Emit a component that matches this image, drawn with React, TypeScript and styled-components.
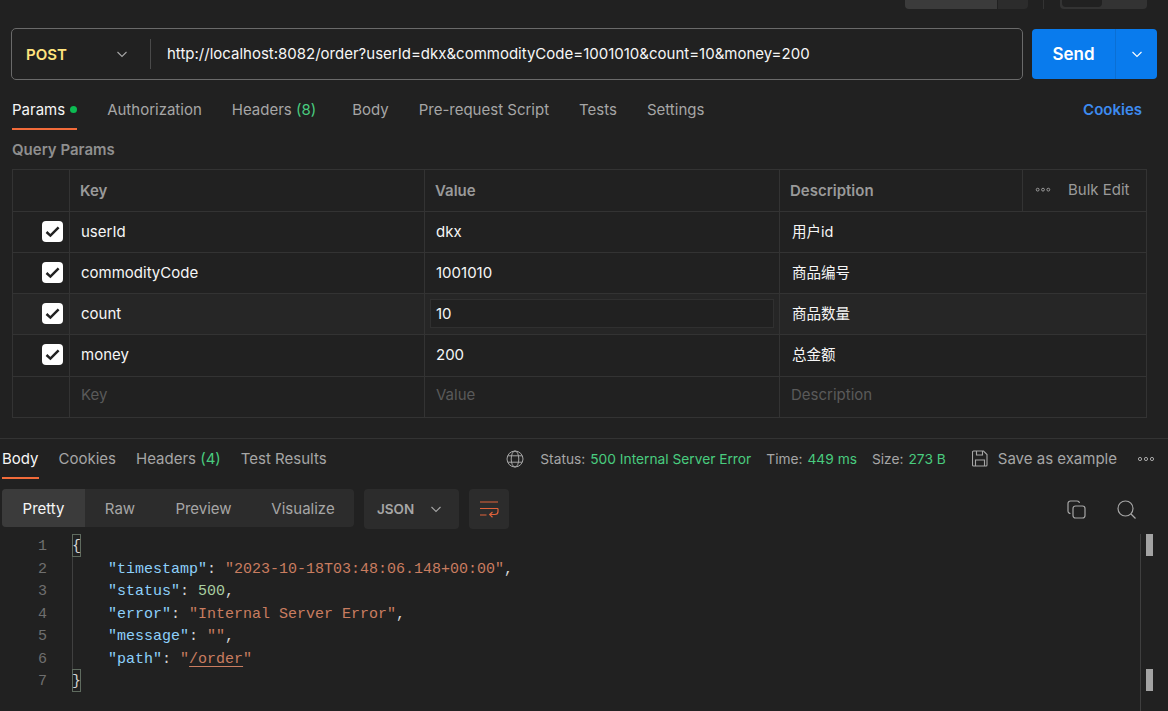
import React from "react";
import styled, { createGlobalStyle } from "styled-components";

const Global = createGlobalStyle`
  html, body { margin: 0; padding: 0; background: #212121; }
  body { font-family: Inter, "Noto Sans CJK SC", sans-serif; font-size: 15px; color: #f2f2f2; overflow: hidden; }
  * { box-sizing: border-box; }
`;

const Page = styled.div`
  width: 1168px;
  height: 711px;
  display: flex;
  flex-direction: column;
  overflow: hidden;
  background: #212121;
`;

const TopStrip = styled.div`
  height: 9px;
  padding-right: 21px;
  display: flex;
  justify-content: flex-end;
  flex-shrink: 0;
`;
const StripMain = styled.div`
  width: 92px;
  background: #3b3b3b;
  border-radius: 0 0 0 4px;
`;
const StripSide = styled.div`
  width: 30px;
  margin-left: 1px;
  background: #2c2c2c;
  border-radius: 0 0 4px 0;
`;
const StripDivider = styled.div`
  width: 1px;
  margin: 0 16px 0 15px;
  background: #333;
`;
const StripToggle = styled.div`
  width: 87px;
  padding: 0 45px 0 2px;
  background: #333;
  border-radius: 0 0 4px 4px;
`;
const StripKnob = styled.div`
  height: 7px;
  background: #212121;
  border-radius: 0 0 4px 4px;
`;

const RequestBar = styled.div`
  margin-top: 19px;
  padding: 0 11px 0 11px;
  display: flex;
  gap: 9px;
  flex-shrink: 0;
`;
const UrlBox = styled.div`
  width: 1012px;
  height: 52px;
  border: 1px solid #6a6a6a;
  border-radius: 5px;
  display: flex;
  align-items: center;
`;
const Method = styled.div`
  width: 139px;
  height: 30px;
  padding: 0 21px 0 14px;
  display: flex;
  align-items: center;
  justify-content: space-between;
  border-right: 1px solid #4a4a4a;
  color: #ffe47e;
  font-weight: 600;
  font-size: 15px;
`;
const Url = styled.div`
  padding: 0 0 2px 16px;
  font-size: 15px;
  color: #f6f6f6;
`;
const Send = styled.div`
  width: 125px;
  height: 50px;
  margin-top: 1px;
  display: flex;
  background: #097bed;
  border-radius: 4px;
  color: #fff;
`;
const SendLabel = styled.div`
  width: 84px;
  display: flex;
  align-items: center;
  justify-content: center;
  padding-bottom: 1px;
  font-size: 17px;
  font-weight: 600;
  border-right: 1px solid #0a6fd4;
`;
const SendArrow = styled.div`
  flex: 1;
  display: flex;
  align-items: center;
  justify-content: center;
`;

const ReqTabs = styled.div`
  margin-top: 19px;
  padding: 0 26px 0 12px;
  display: flex;
  align-items: flex-start;
  flex-shrink: 0;
`;
const Tab = styled.div<{ $active?: boolean; $after?: number }>`
  height: 31px;
  margin-right: ${(p) => p.$after ?? 30}px;
  line-height: 21px;
  font-size: 15px;
  white-space: nowrap;
  color: ${(p) => (p.$active ? "#f6f6f6" : "#a6a6a6")};
  border-bottom: 2px solid ${(p) => (p.$active ? "#f26b3a" : "transparent")};
`;
const Count = styled.span`
  color: #49cc7f;
`;
const Dot = styled.span`
  display: inline-block;
  width: 7px;
  height: 7px;
  margin-left: 5px;
  vertical-align: 2px;
  border-radius: 50%;
  background: #0cbb52;
`;
const CookiesLink = styled.div`
  margin-left: auto;
  line-height: 21px;
  font-weight: 600;
  font-size: 15px;
  color: #3d8bf0;
`;

const SectionTitle = styled.div`
  margin: 10px 0 0 12px;
  height: 19px;
  line-height: 19px;
  font-weight: 600;
  font-size: 15px;
  color: #8f8f8f;
  flex-shrink: 0;
`;

const Table = styled.div`
  margin: 10px 0 0 12px;
  width: 1135px;
  border-top: 1px solid #333;
  border-left: 1px solid #333;
  border-right: 1px solid #333;
  flex-shrink: 0;
`;
const Row = styled.div<{ $h: number; $hover?: boolean }>`
  display: grid;
  grid-template-columns: 57px 355px 355px 1fr;
  height: ${(p) => p.$h}px;
  border-bottom: 1px solid #333;
  background: ${(p) => (p.$hover ? "#262626" : "transparent")};
`;
const Cell = styled.div<{ $last?: boolean }>`
  display: flex;
  align-items: center;
  padding: 0 0 2px 11px;
  font-size: 15px;
  color: #f6f6f6;
  border-right: ${(p) => (p.$last ? "none" : "1px solid #333")};
`;
const CheckCell = styled(Cell)`
  padding-left: 29px;
`;
const HeadCell = styled(Cell)`
  padding: 0 0 0 10px;
  font-weight: 600;
  color: #9a9a9a;
`;
const DescHead = styled.div`
  display: grid;
  grid-template-columns: 243px 1fr;
  height: 100%;
`;
const DescTitle = styled.div`
  display: flex;
  align-items: center;
  padding: 0 0 0 10px;
  font-weight: 600;
  color: #9a9a9a;
  border-right: 1px solid #333;
`;
const BulkArea = styled.div`
  display: flex;
  align-items: center;
  padding: 0 0 2px 12px;
  gap: 17px;
  color: #9a9a9a;
`;
const Placeholder = styled(Cell)`
  padding-bottom: 6px;
  color: #5a5a5a;
`;
const DescCell = styled(Cell)`
  padding: 0 0 4px 12px;
  font-size: 14.5px;
`;
const ActiveInput = styled.div`
  flex: 1;
  height: 29px;
  margin: 1px 5px 0 -6px;
  padding: 0 0 1px 5px;
  display: flex;
  align-items: center;
  border: 1px solid #303030;
  background: #212121;
`;
const Checkbox = styled.div`
  width: 21px;
  height: 21px;
  background: #fff;
  border-radius: 4px;
  display: flex;
  align-items: center;
  justify-content: center;
`;

const Response = styled.div`
  margin-top: 20px;
  border-top: 1px solid #333;
  flex: 1;
  display: flex;
  flex-direction: column;
  min-height: 0;
`;
const ResBar = styled.div`
  height: 40px;
  padding: 9px 13px 0 2px;
  display: flex;
  align-items: flex-start;
  flex-shrink: 0;
`;
const Meta = styled.div`
  margin-left: auto;
  height: 21px;
  display: flex;
  align-items: center;
  font-size: 13.75px;
  color: #a6a6a6;
`;
const MetaGroup = styled.span<{ $gap?: number }>`
  margin-left: ${(p) => p.$gap ?? 15}px;
  display: inline-flex;
  align-items: center;
  white-space: nowrap;
`;
const MetaVal = styled.span`
  color: #49cc7f;
  margin-left: 5px;
`;
const SaveLabel = styled.span`
  margin-left: 10px;
  font-size: 15px;
`;

const Toolbar = styled.div`
  height: 55px;
  padding: 10px 32px 0 2px;
  display: flex;
  align-items: flex-start;
  flex-shrink: 0;
`;
const Segments = styled.div`
  width: 352px;
  height: 38px;
  display: flex;
  background: #2c2c2c;
  border-radius: 4px;
  overflow: hidden;
`;
const Segment = styled.div<{ $w: number; $active?: boolean }>`
  width: ${(p) => p.$w}px;
  display: flex;
  align-items: center;
  justify-content: center;
  font-size: 15px;
  color: ${(p) => (p.$active ? "#f6f6f6" : "#a6a6a6")};
  background: ${(p) => (p.$active ? "#3b3b3b" : "transparent")};
`;
const FormatSelect = styled.div`
  width: 95px;
  height: 40px;
  margin-left: 10px;
  padding: 0 16px 0 13px;
  display: flex;
  align-items: center;
  justify-content: space-between;
  background: #2c2c2c;
  border-radius: 4px;
  font-size: 13.5px;
  font-weight: 600;
  color: #a6a6a6;
`;
const WrapBtn = styled.div`
  width: 40px;
  height: 40px;
  margin-left: 10px;
  display: flex;
  align-items: center;
  justify-content: center;
  background: #2c2c2c;
  border-radius: 4px;
`;
const ToolIcons = styled.div`
  margin-left: auto;
  height: 40px;
  display: flex;
  align-items: center;
  gap: 31px;
`;

const Code = styled.div`
  position: relative;
  flex: 1;
  display: flex;
  font-family: "Liberation Mono", monospace;
  font-size: 15px;
  line-height: 22.5px;
`;
const Gutter = styled.div`
  width: 47px;
  text-align: right;
  color: #6f6f6f;
  flex-shrink: 0;
`;
const Lines = styled.div`
  position: relative;
  margin-left: 26px;
  color: #d4d4d4;
  white-space: pre;
`;
const CodeLine = styled.div`
  height: 22.5px;
  padding-top: 2px;
`;
const Indent = styled.span`
  padding-left: 35px;
`;
const K = styled.span`
  color: #8dd0fb;
`;
const S = styled.span`
  color: #c97d60;
`;
const N = styled.span`
  color: #a9cfa0;
`;
const Link = styled.span`
  text-decoration: underline;
  text-underline-offset: 3px;
`;
const Brace = styled.div`
  width: 9px;
  height: 22.5px;
  margin-left: -1px;
  padding-top: 2px;
  border: 1px solid #5f6b5f;
  line-height: 20px;
  text-indent: -1px;
`;
const IndentGuide = styled.div`
  position: absolute;
  left: -1px;
  top: 23px;
  height: 112px;
  width: 1px;
  background: #404040;
`;
const RulerLine = styled.div`
  position: absolute;
  left: 1140px;
  top: 0;
  bottom: 0;
  width: 1px;
  background: #3f3f3f;
`;
const RulerMark = styled.div<{ $top: number }>`
  position: absolute;
  left: 1146px;
  top: ${(p) => p.$top}px;
  width: 7px;
  height: 22px;
  background: #a3a3a3;
`;

const Chevron = ({ color = "#a6a6a6", size = 14 }: { color?: string; size?: number }) => (
  <svg width={size} height={size} viewBox="0 0 14 14" fill="none">
    <path d="M2.5 5l4.5 4.5L11.5 5" stroke={color} strokeWidth="1.1" />
  </svg>
);

const Check = () => (
  <svg width="15" height="15" viewBox="0 0 15 15" fill="none">
    <path d="M1.5 8l3.9 3.6L13.6 3.4" stroke="#212121" strokeWidth="2.5" />
  </svg>
);

const Dots = ({ width = 16 }: { width?: number }) => (
  <svg width={width} height={(width * 6) / 18} viewBox="0 0 18 6" fill="none" stroke="#a6a6a6" strokeWidth="1">
    <circle cx="3" cy="3" r="1.6" />
    <circle cx="9" cy="3" r="1.6" />
    <circle cx="15" cy="3" r="1.6" />
  </svg>
);

const Globe = () => (
  <svg width="18" height="18" viewBox="0 0 18 18" fill="none" stroke="#a6a6a6" strokeWidth="1">
    <circle cx="9" cy="9" r="8" />
    <ellipse cx="9" cy="9" rx="3.8" ry="8" />
    <path d="M2 5.8h14M2 12.2h14" />
  </svg>
);

const SaveIcon = () => (
  <svg width="16" height="17" viewBox="0 0 16 17" fill="none" stroke="#a6a6a6" strokeWidth="1.1">
    <path d="M1.5 1h10l3.5 3.5v10.5a1 1 0 0 1-1 1H1.5a1 1 0 0 1-1-1V2a1 1 0 0 1 1-1z" />
    <path d="M4.5 1v4h6V1M3.5 16v-6h9v6" />
  </svg>
);

const WrapIcon = () => (
  <svg width="20" height="18" viewBox="0 0 20 18" fill="none" stroke="#e0623a" strokeWidth="1.2">
    <path d="M1 2h18M1 8.5h18M1 15h6.5" />
    <path d="M19 8.5v3a3 3 0 0 1-3 3h-5M13.5 12l-2.8 2.6 2.8 2.6" />
  </svg>
);

const CopyIcon = () => (
  <svg width="19" height="19" viewBox="0 0 19 19" fill="none" stroke="#a6a6a6" strokeWidth="1.2">
    <rect x="6" y="6" width="12" height="12" rx="2.5" />
    <path d="M3.5 13.5A2.5 2.5 0 0 1 1 11V3.5A2.5 2.5 0 0 1 3.5 1H10a2.5 2.5 0 0 1 2.5 2" />
  </svg>
);

const SearchIcon = () => (
  <svg width="19" height="19" viewBox="0 0 19 19" fill="none" stroke="#a6a6a6" strokeWidth="1.2">
    <circle cx="8.5" cy="8.5" r="7.5" />
    <path d="M14 14l4.5 4.5" />
  </svg>
);

const params = [
  { key: "userId", value: "dkx", desc: "用户id", h: 41 },
  { key: "commodityCode", value: "1001010", desc: "商品编号", h: 41 },
  { key: "count", value: "10", desc: "商品数量", h: 41, hover: true },
  { key: "money", value: "200", desc: "总金额", h: 42 },
];

export default function App() {
  return (
    <Page>
      <Global />
      <TopStrip>
        <StripMain />
        <StripSide />
        <StripDivider />
        <StripToggle>
          <StripKnob />
        </StripToggle>
      </TopStrip>

      <RequestBar>
        <UrlBox>
          <Method>
            POST
            <Chevron />
          </Method>
          <Url>http://localhost:8082/order?userId=dkx&amp;commodityCode=1001010&amp;count=10&amp;money=200</Url>
        </UrlBox>
        <Send>
          <SendLabel>Send</SendLabel>
          <SendArrow>
            <Chevron color="#ffffff" />
          </SendArrow>
        </Send>
      </RequestBar>

      <ReqTabs>
        <Tab $active>
          Params
          <Dot />
        </Tab>
        <Tab>Authorization</Tab>
        <Tab $after={36}>
          Headers <Count>(8)</Count>
        </Tab>
        <Tab>Body</Tab>
        <Tab>Pre-request Script</Tab>
        <Tab>Tests</Tab>
        <Tab>Settings</Tab>
        <CookiesLink>Cookies</CookiesLink>
      </ReqTabs>

      <SectionTitle>Query Params</SectionTitle>

      <Table>
        <Row $h={42}>
          <Cell />
          <HeadCell>Key</HeadCell>
          <HeadCell>Value</HeadCell>
          <DescHead>
            <DescTitle>Description</DescTitle>
            <BulkArea>
              <Dots />
              Bulk Edit
            </BulkArea>
          </DescHead>
        </Row>
        {params.map((p) => (
          <Row key={p.key} $h={p.h} $hover={p.hover}>
            <CheckCell>
              <Checkbox>
                <Check />
              </Checkbox>
            </CheckCell>
            <Cell>{p.key}</Cell>
            <Cell>{p.hover ? <ActiveInput>{p.value}</ActiveInput> : p.value}</Cell>
            <DescCell $last>{p.desc}</DescCell>
          </Row>
        ))}
        <Row $h={41}>
          <Cell />
          <Placeholder>Key</Placeholder>
          <Placeholder>Value</Placeholder>
          <Placeholder $last>Description</Placeholder>
        </Row>
      </Table>

      <Response>
        <ResBar>
          <Tab $active $after={20}>
            Body
          </Tab>
          <Tab $after={20}>Cookies</Tab>
          <Tab $after={20}>
            Headers <Count>(4)</Count>
          </Tab>
          <Tab $after={20}>Test Results</Tab>
          <Meta>
            <Globe />
            <MetaGroup $gap={16}>
              Status:<MetaVal>500 Internal Server Error</MetaVal>
            </MetaGroup>
            <MetaGroup>
              Time:<MetaVal>449 ms</MetaVal>
            </MetaGroup>
            <MetaGroup>
              Size:<MetaVal>273 B</MetaVal>
            </MetaGroup>
            <MetaGroup $gap={26}>
              <SaveIcon />
              <SaveLabel>Save as example</SaveLabel>
            </MetaGroup>
            <MetaGroup $gap={20}>
              <Dots width={18} />
            </MetaGroup>
          </Meta>
        </ResBar>

        <Toolbar>
          <Segments>
            <Segment $w={83} $active>
              Pretty
            </Segment>
            <Segment $w={70}>Raw</Segment>
            <Segment $w={97}>Preview</Segment>
            <Segment $w={102}>Visualize</Segment>
          </Segments>
          <FormatSelect>
            JSON
            <Chevron />
          </FormatSelect>
          <WrapBtn>
            <WrapIcon />
          </WrapBtn>
          <ToolIcons>
            <CopyIcon />
            <SearchIcon />
          </ToolIcons>
        </Toolbar>

        <Code>
          <Gutter>
            {[1, 2, 3, 4, 5, 6, 7].map((n) => (
              <CodeLine key={n}>{n}</CodeLine>
            ))}
          </Gutter>
          <Lines>
            <IndentGuide />
            <Brace>{"{"}</Brace>
            <CodeLine>
              <Indent />
              <K>"timestamp"</K>: <S>"2023-10-18T03:48:06.148+00:00"</S>,
            </CodeLine>
            <CodeLine>
              <Indent />
              <K>"status"</K>: <N>500</N>,
            </CodeLine>
            <CodeLine>
              <Indent />
              <K>"error"</K>: <S>"Internal Server Error"</S>,
            </CodeLine>
            <CodeLine>
              <Indent />
              <K>"message"</K>: <S>""</S>,
            </CodeLine>
            <CodeLine>
              <Indent />
              <K>"path"</K>: <S>"<Link>/order</Link>"</S>
            </CodeLine>
            <Brace>{"}"}</Brace>
          </Lines>
          <RulerLine />
          <RulerMark $top={0} />
          <RulerMark $top={135} />
        </Code>
      </Response>
    </Page>
  );
}
